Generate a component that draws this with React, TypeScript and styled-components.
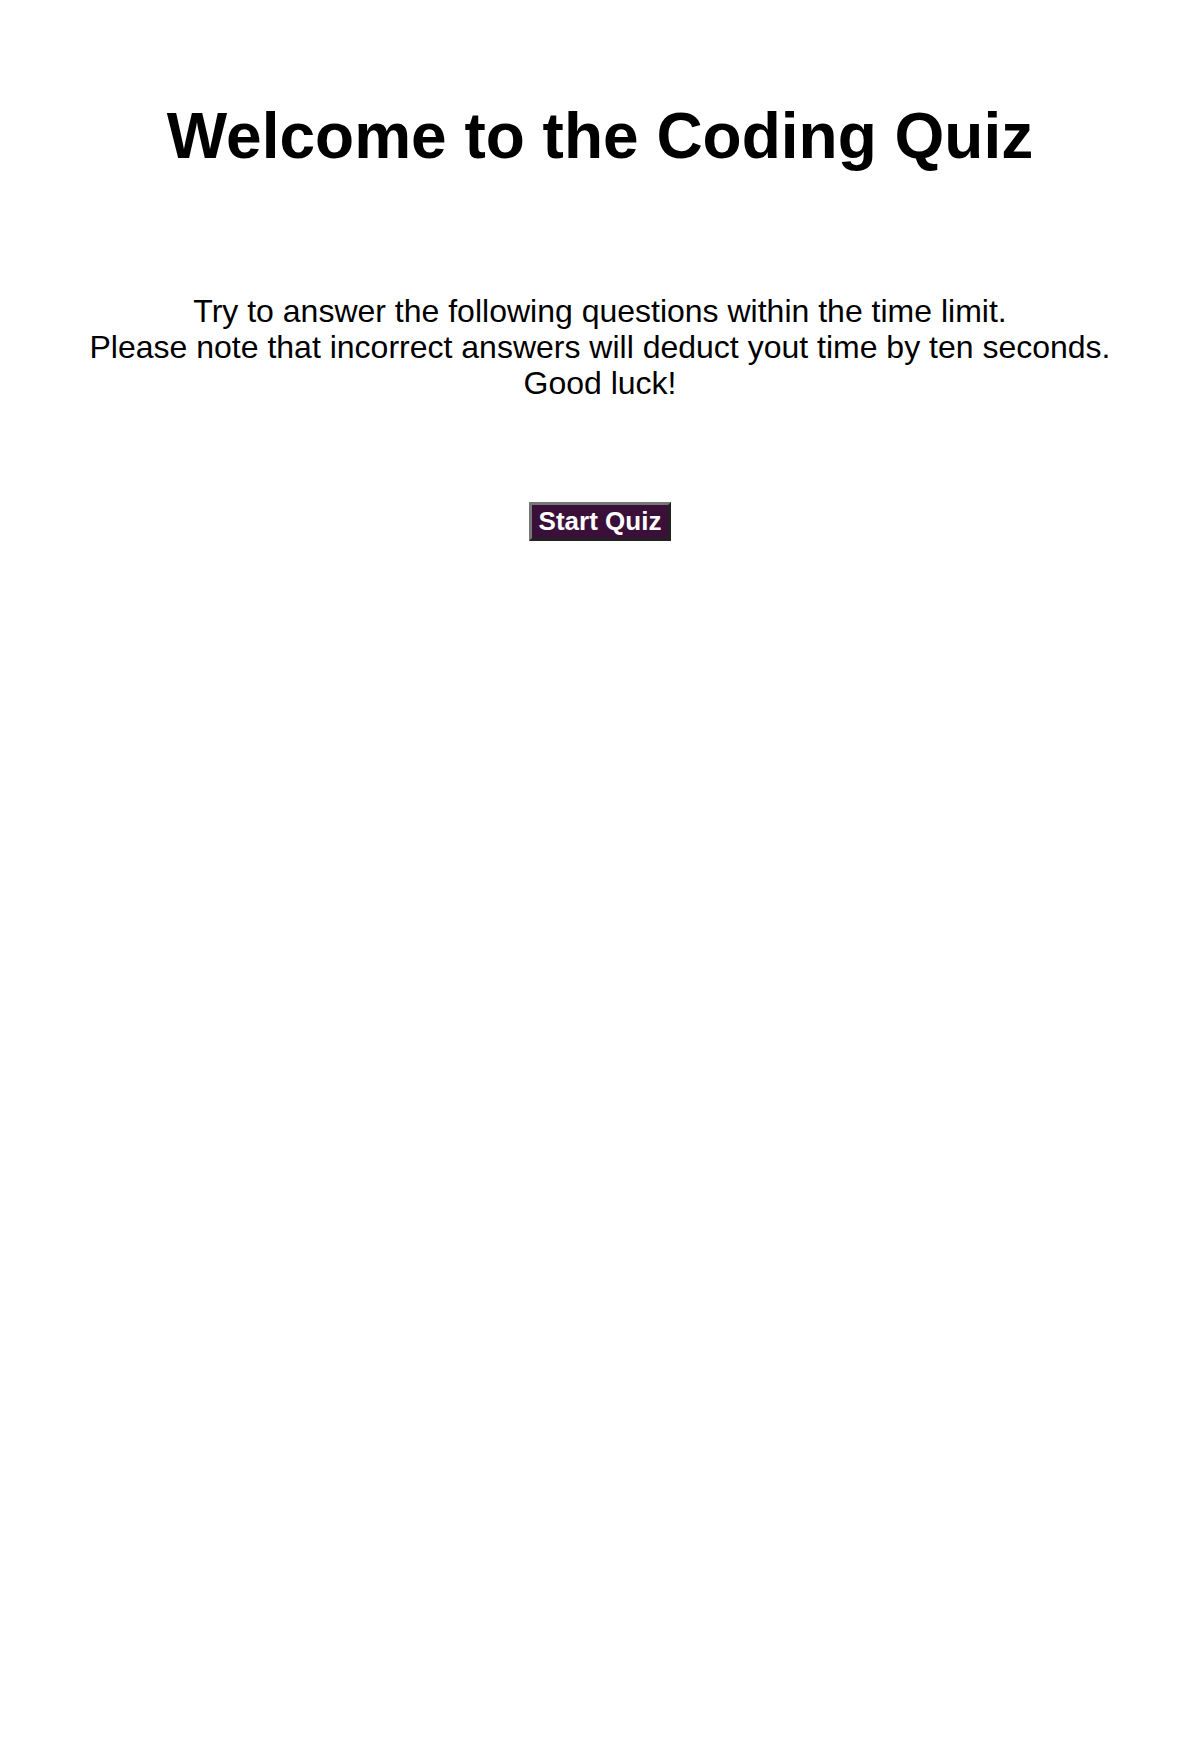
import React from "react";
import styled, { createGlobalStyle } from "styled-components";

const GlobalStyle = createGlobalStyle`
  html, body {
    margin: 0;
    padding: 0;
    background: #ffffff;
  }
  body {
    font-family: "Liberation Sans", Arial, sans-serif;
    color: #000000;
  }
`;

const Page = styled.main`
  display: flex;
  flex-direction: column;
  align-items: center;
  padding-top: 99px;
  min-height: 1764px;
  box-sizing: border-box;
`;

const Title = styled.h1`
  margin: 0;
  font-size: 64px;
  font-weight: 700;
  line-height: normal;
  text-align: center;
`;

const Intro = styled.p`
  margin: 120px 0 0;
  font-size: 32px;
  line-height: 36px;
  text-align: center;
`;

const StartButton = styled.button`
  margin-top: 101px;
  font-family: "Liberation Sans", Arial, sans-serif;
  font-size: 26px;
  font-weight: 700;
  line-height: normal;
  color: #ffffff;
  background: #3a1039;
  border: 3px solid;
  border-color: #777777 #222222 #222222 #777777;
  padding: 1px 7px;
  cursor: pointer;
`;

export default function App() {
  return (
    <>
      <GlobalStyle />
      <Page>
        <Title>Welcome to the Coding Quiz</Title>
        <Intro>
          Try to answer the following questions within the time limit.
          <br />
          Please note that incorrect answers will deduct yout time by ten seconds.
          <br />
          Good luck!
        </Intro>
        <StartButton type="button">Start Quiz</StartButton>
      </Page>
    </>
  );
}
